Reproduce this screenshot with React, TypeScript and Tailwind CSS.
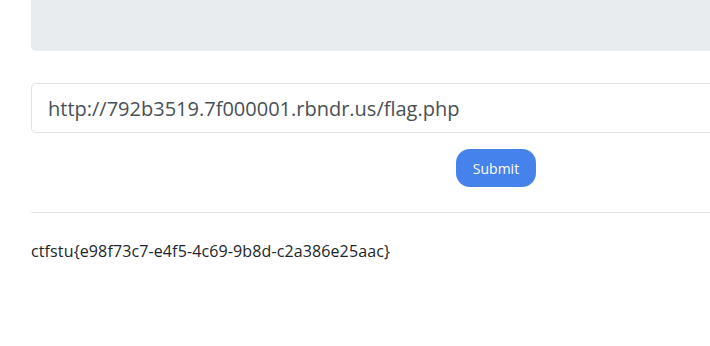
import React, { useState } from 'react';

const App: React.FC = () => {
  const [url, setUrl] = useState('http://792b3519.7f000001.rbndr.us/flag.php');

  return (
    <div className="w-[710px] h-[346px] overflow-hidden bg-white font-['Open_Sans',sans-serif] text-[#212529]">
      <div className="ml-[31px] w-[930px]">
        <div className="h-[51px] bg-[#e9ecef] rounded-b-[5px]" />
        <form className="mt-[32px]" onSubmit={(e) => e.preventDefault()}>
          <input
            className="block w-full h-[50px] px-4 border border-[#dfe2e6] rounded-[5px] text-[20px] text-[#495057] outline-none"
            value={url}
            onChange={(e) => setUrl(e.target.value)}
          />
          <div className="flex justify-center mt-[16px]">
            <button
              type="submit"
              className="w-[80px] h-[38px] rounded-[14px] bg-[#4582ec] text-white text-[14px]"
            >
              Submit
            </button>
          </div>
        </form>
        <hr className="mt-[25px] border-t border-[#e5e5e5]" />
        <p className="mt-[26px] text-[16px] leading-[24px] tracking-[0.12px]">ctfstu{'{'}e98f73c7-e4f5-4c69-9b8d-c2a386e25aac{'}'}</p>
      </div>
    </div>
  );
};

export default App;
